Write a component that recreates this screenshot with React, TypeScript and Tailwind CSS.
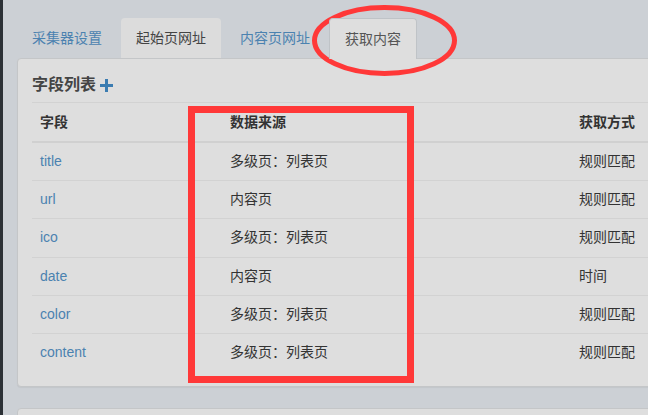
import React from 'react';

const fields = [
  { name: 'title', source: '多级页：列表页', method: '规则匹配' },
  { name: 'url', source: '内容页', method: '规则匹配' },
  { name: 'ico', source: '多级页：列表页', method: '规则匹配' },
  { name: 'date', source: '内容页', method: '时间' },
  { name: 'color', source: '多级页：列表页', method: '规则匹配' },
  { name: 'content', source: '多级页：列表页', method: '规则匹配' },
];

const tabs = [
  { label: '采集器设置', state: 'link' },
  { label: '起始页网址', state: 'hover' },
  { label: '内容页网址', state: 'link' },
  { label: '获取内容', state: 'active' },
];

function PlusIcon() {
  return (
    <svg width="13" height="13" viewBox="0 0 13 13" className="ml-[4px]">
      <path d="M5 0h3v5h5v3H8v5H5V8H0V5h5z" fill="#3b7cb1" />
    </svg>
  );
}

export default function App() {
  return (
    <div
      className="relative flex w-[648px] h-[415px] overflow-hidden bg-[#ccd0d5] text-[14px] text-[#333]"
      style={{ fontFamily: '"Liberation Sans", "Noto Sans CJK SC", sans-serif' }}
    >
      <div className="w-[3px] shrink-0 bg-[#2c3136]" />
      <div className="flex-1 pl-[14px]">
        {/* page title, mostly scrolled off */}
        <div className="h-[18px] overflow-hidden">
          <div className="mt-[-26px] pl-[10px] text-[26px] leading-[28px] text-[#222]">
            采集器设置 <span className="text-[#999]">—</span> 获取内容
          </div>
        </div>

        {/* tabs */}
        <div className="flex gap-[4px] h-[40px]">
          {tabs.map((t) => (
            <div
              key={t.label}
              className={
                t.state === 'active'
                  ? 'px-[15px] h-[41px] flex items-center bg-[#dedede] border border-[#bfc3c7] border-b-0 rounded-t-[4px] text-[#555] relative z-10'
                  : t.state === 'hover'
                  ? 'px-[15px] flex items-center bg-[#dcdcdc] rounded-t-[4px] text-[#444]'
                  : 'px-[15px] flex items-center text-[#4b82b0]'
              }
            >
              {t.label}
            </div>
          ))}
        </div>

        {/* field list panel */}
        <div className="w-[700px] h-[329px] bg-[#dedede] border border-[#c4c6c8] rounded-[4px] px-[14px] pt-[15px] shadow-[0_1px_1px_rgba(0,0,0,0.05)]">
          <div className="flex items-center h-[22px] mb-[6px] text-[16px] font-bold text-[#444]">
            字段列表
            <PlusIcon />
          </div>
          <table className="w-full border-collapse">
            <thead>
              <tr className="border-t border-[#d2d2d2] border-b-2 border-b-[#d0d0d0]">
                <th className="w-[190px] text-left font-bold px-[8px] py-[8px] leading-[22px]">字段</th>
                <th className="w-[349px] text-left font-bold px-[8px] py-[8px] leading-[22px]">数据来源</th>
                <th className="text-left font-bold px-[8px] py-[8px] leading-[22px]">获取方式</th>
              </tr>
            </thead>
            <tbody>
              {fields.map((f, i) => (
                <tr key={f.name} className={i > 0 ? 'border-t border-[#d2d2d2]' : ''}>
                  <td className="px-[8px] py-[8px] leading-[21.2px] text-[#4b82b0]">{f.name}</td>
                  <td className="px-[8px] py-[8px] leading-[21.2px]">{f.source}</td>
                  <td className="px-[8px] py-[8px] leading-[21.2px]">{f.method}</td>
                </tr>
              ))}
            </tbody>
          </table>
        </div>

        {/* next panel */}
        <div className="mt-[21px] w-[700px] h-[40px] bg-[#dedede] border border-[#c4c6c8] rounded-[4px]" />
      </div>

      {/* red annotations */}
      <svg className="absolute inset-0 pointer-events-none" width="648" height="415">
        <ellipse cx="384.5" cy="40.5" rx="70" ry="33" fill="none" stroke="#ff3838" strokeWidth="5" />
        <rect x="191.5" y="109.5" width="219" height="270" fill="none" stroke="#ff3838" strokeWidth="7" />
      </svg>
    </div>
  );
}
